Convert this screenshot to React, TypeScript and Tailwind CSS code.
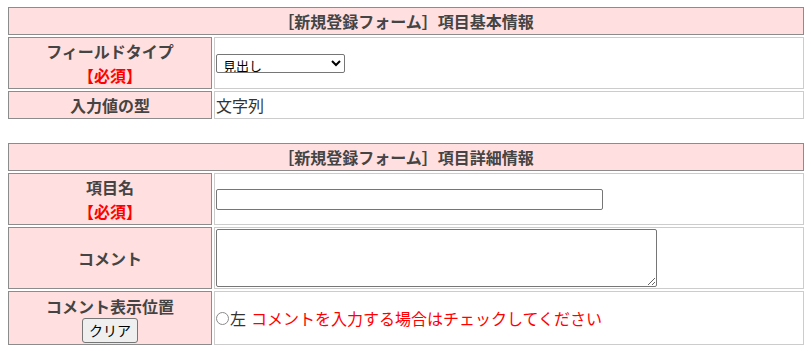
import React from "react"

const labelCell =
  "bg-[#ffdfdf] border border-[#8c8c8c] text-center align-middle font-bold text-[#444] p-[1px] w-[204px]"
const valueCell = "border border-[#cccccc] align-middle p-[1px] text-[#333]"

const Header = ({ title }: { title: string }) => (
  <tr>
    <th
      colSpan={2}
      className="bg-[#ffdfdf] border border-[#8c8c8c] h-[28px] p-0 text-center align-middle font-bold text-[#444] leading-[24px]"
    >
      {title}
    </th>
  </tr>
)

const Required = () => <div className="text-[#ff0000]">【必須】</div>

export default function App() {
  return (
    <div className="bg-white min-h-[351px] pt-[5px] pl-[6px] font-['Noto_Sans_CJK_JP','Noto_Sans',sans-serif] text-[16px] leading-[24px]">
      <table className="w-[800px] border-separate border-spacing-[2px]">
        <tbody>
          <Header title="［新規登録フォーム］項目基本情報" />
          <tr>
            <td className={`${labelCell} h-[52px]`}>
              <div>フィールドタイプ</div>
              <Required />
            </td>
            <td className={valueCell}>
              <select
                defaultValue="見出し"
                className="block w-[129px] h-[19px] text-[13px] leading-[17px] border border-[#767676] rounded-[2px] bg-white text-black pl-[2px]"
              >
                <option>見出し</option>
                <option>テキスト</option>
              </select>
            </td>
          </tr>
          <tr>
            <td className={`${labelCell} h-[28px]`}>入力値の型</td>
            <td className={valueCell}>文字列</td>
          </tr>
        </tbody>
      </table>

      <table className="w-[800px] border-separate border-spacing-[2px] mt-[20px]">
        <tbody>
          <Header title="［新規登録フォーム］項目詳細情報" />
          <tr>
            <td className={`${labelCell} h-[52px]`}>
              <div>項目名</div>
              <Required />
            </td>
            <td className={valueCell}>
              <input
                type="text"
                className="block w-[387px] h-[21px] border border-[#767676] rounded-[2px] bg-white text-[13px] px-[2px]"
              />
            </td>
          </tr>
          <tr>
            <td className={`${labelCell} h-[62px]`}>コメント</td>
            <td className={valueCell}>
              <textarea className="block w-[441px] h-[58px] border border-[#767676] rounded-[2px] bg-white text-[13px] p-[2px]" />
            </td>
          </tr>
          <tr>
            <td className={`${labelCell} h-[54px]`}>
              <div>コメント表示位置</div>
              <button
                type="button"
                className="w-[56px] h-[25px] mx-auto block bg-[#efefef] border border-[#767676] rounded-[3px] font-normal text-[14px] leading-[20px] text-black"
              >
                クリア
              </button>
            </td>
            <td className={valueCell}>
              <label className="inline-flex items-center">
                <input
                  type="radio"
                  name="pos"
                  className="appearance-none w-[13px] h-[13px] rounded-full border border-[#8a8a8a] bg-white m-0"
                />
                <span className="ml-[1px]">左</span>
              </label>
              <span className="ml-[5px] text-[#ff0000]">コメントを入力する場合はチェックしてください</span>
            </td>
          </tr>
        </tbody>
      </table>
    </div>
  )
}
